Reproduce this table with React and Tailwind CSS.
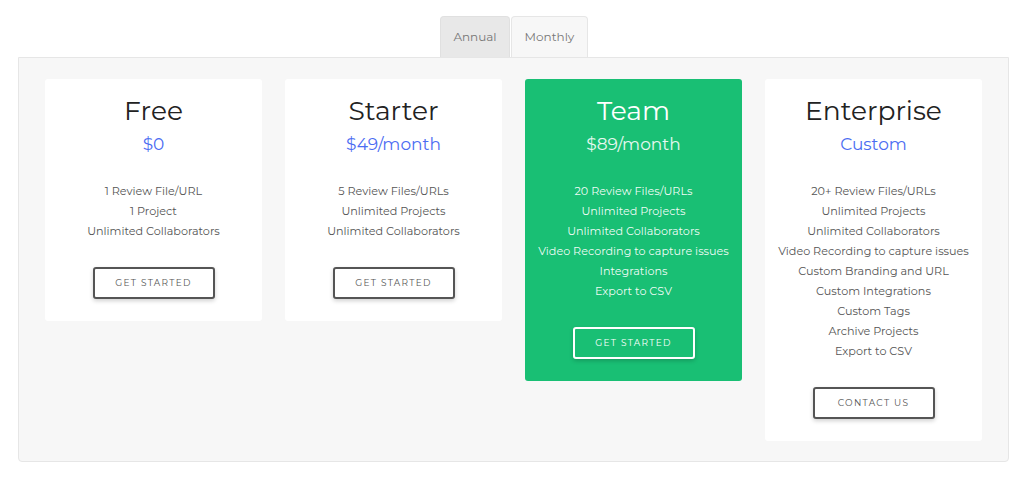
const plans = [
  {
    name: 'Free',
    price: '$0',
    features: ['1 Review File/URL', '1 Project', 'Unlimited Collaborators'],
    cta: 'Get Started',
  },
  {
    name: 'Starter',
    price: '$49/month',
    features: ['5 Review Files/URLs', 'Unlimited Projects', 'Unlimited Collaborators'],
    cta: 'Get Started',
  },
  {
    name: 'Team',
    price: '$89/month',
    featured: true,
    features: [
      '20 Review Files/URLs',
      'Unlimited Projects',
      'Unlimited Collaborators',
      'Video Recording to capture issues',
      'Integrations',
      'Export to CSV',
    ],
    cta: 'Get Started',
  },
  {
    name: 'Enterprise',
    price: 'Custom',
    features: [
      '20+ Review Files/URLs',
      'Unlimited Projects',
      'Unlimited Collaborators',
      'Video Recording to capture issues',
      'Custom Branding and URL',
      'Custom Integrations',
      'Custom Tags',
      'Archive Projects',
      'Export to CSV',
    ],
    cta: 'Contact Us',
  },
];

function PlanCard({ plan }) {
  const f = plan.featured;
  return (
    <div
      className={`w-[217px] rounded-[3px] px-2 pt-[14px] pb-[22px] flex flex-col items-center text-center ${
        f ? 'bg-[#19bf74] text-white' : 'bg-white'
      }`}
    >
      <h2 className={`text-[26.5px] leading-[36px] ${f ? 'text-white' : 'text-[#222]'}`}>{plan.name}</h2>
      <div className={`mt-[3px] text-[17px] leading-[24px] ${f ? 'text-white/90' : 'text-[#4b6cf2]'}`}>
        {plan.price}
      </div>
      <ul className={`mt-[25px] text-[11.2px] leading-[20px] ${f ? 'text-white/95' : 'text-[#555]'}`}>
        {plan.features.map((x) => (
          <li key={x} className="whitespace-nowrap">{x}</li>
        ))}
      </ul>
      <button
        type="button"
        className={`mt-[26px] w-[122px] h-[32px] rounded-[3px] border-2 uppercase text-[9px] tracking-[1.3px] shadow-[0_2px_4px_rgba(0,0,0,0.18)] ${
          f ? 'border-white text-white bg-transparent' : 'border-[#555] text-[#555] bg-white'
        }`}
      >
        {plan.cta}
      </button>
    </div>
  );
}

export default function App() {
  return (
    <div className="w-[1024px] h-[480px] bg-white pt-4 px-[18px] font-['Montserrat','Noto_Sans',sans-serif]">
      {/* tabs */}
      <div className="flex justify-center pl-[4px]">
        <div className="flex gap-px">
          <button className="w-[70px] h-[41px] rounded-t-[4px] bg-[#e8e8e8] border border-b-0 border-[#e0e0e0] text-[12px] text-[#777]">
            Annual
          </button>
          <button className="w-[77px] h-[41px] rounded-t-[4px] bg-[#f7f7f7] border border-b-0 border-[#e6e6e6] text-[12px] text-[#777]">
            Monthly
          </button>
        </div>
      </div>

      {/* panel */}
      <div className="w-[991px] h-[405px] bg-[#f7f7f7] border border-[#e6e6e6] rounded-b-[4px] pt-[21px] pl-[26px] flex items-start gap-[23px]">
        {plans.map((p) => (
          <PlanCard key={p.name} plan={p} />
        ))}
      </div>
    </div>
  );
}
